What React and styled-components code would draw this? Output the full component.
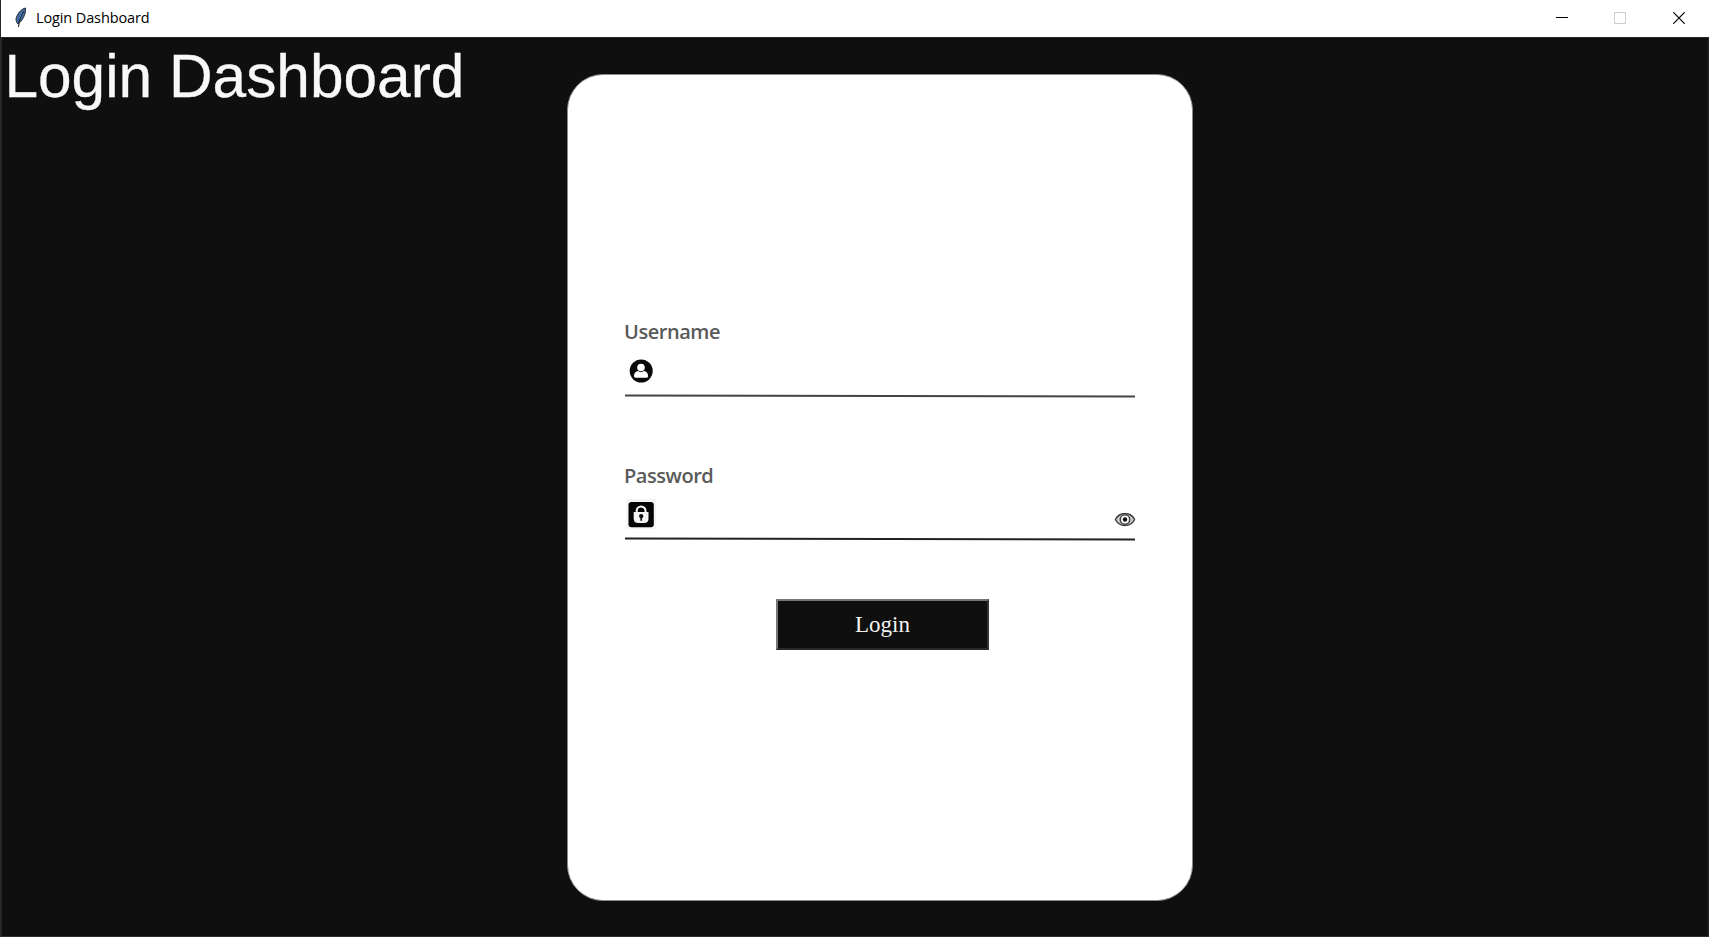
import React from "react";
import styled, { createGlobalStyle } from "styled-components";

const GlobalStyle = createGlobalStyle`
  * { box-sizing: border-box; }
  body { margin: 0; overflow: hidden; background: #0f0f0f; }
`;

const Window = styled.div`
  display: flex;
  flex-direction: column;
  width: 1709px;
  height: 937px;
  background: #0f0f0f;
`;

const TitleBar = styled.header`
  display: flex;
  align-items: center;
  justify-content: space-between;
  height: 37px;
  padding: 0 24px 2px 14px;
  background: #fff;
  border-left: 1px solid #262626;
`;

const TitleGroup = styled.div`
  display: flex;
  align-items: center;
`;

const TitleText = styled.span`
  margin: 1px 0 0 9px;
  font: 400 14.5px/20px "Open Sans", sans-serif;
  letter-spacing: -0.12px;
  color: #000;
`;

const Controls = styled.div`
  display: flex;
  align-items: center;
  margin-top: 1px;
`;

const Control = styled.button`
  display: flex;
  margin-left: ${(p) => p.$gap || "0"};
  padding: 0;
  border: 0;
  background: none;
`;

const Body = styled.main`
  display: grid;
  grid-template-columns: 565px 626px 1fr;
  align-items: start;
  flex: 1;
  border: 1px solid #272727;
  border-left-width: 2px;
  border-bottom-color: #302c31;
`;

const Heading = styled.h1`
  margin: 4px 0 0 2.4px;
  font: 400 60.4px/69px "Liberation Sans", Arial, sans-serif;
  color: #f8f8f8;
  -webkit-text-stroke: 0.3px #f8f8f8;
  white-space: nowrap;
`;

const Card = styled.form`
  display: flex;
  flex-direction: column;
  height: 827px;
  margin-top: 36px;
  padding: 243px 57px 0;
  border: 1px solid #8b8b8b;
  border-radius: 36px;
  background: #fff;
`;

const Field = styled.div`
  height: 144px;
`;

const Label = styled.label`
  display: block;
  height: 28px;
  margin-left: -1px;
  font: 600 20px/28px "Open Sans", sans-serif;
  letter-spacing: -0.45px;
  color: #5a5a5a;
`;

const Entry = styled.div`
  display: flex;
  align-items: center;
  justify-content: space-between;
  height: ${(p) => p.$height};
`;

const Rule = styled.div`
  height: 1.6px;
  background: ${(p) => p.$color};
  transform: rotate(0.12deg);
`;

const LoginButton = styled.button`
  width: 213px;
  height: 51px;
  margin: -7px 0 0 151px;
  padding: 1px 0 0;
  border: 2px solid;
  border-color: #777 #333 #292929 #777;
  background: #0f0f0f;
  color: #f2f2f2;
  font: 400 23px/30px "Liberation Serif", serif;
`;

const Feather = () => (
  <svg width="12" height="21" viewBox="0 0 12 21">
    <path d="M10.5 1C6 2 2 7 1 12c0 2 1 4 2 5 4-3 8-9 7.500-16Z" fill="#3c6ea5" stroke="#252b33" strokeWidth="1" />
    <path d="M9 3C7 5 5 9 4 13L7 8Z" fill="#8bbce8" />
    <path d="M9 4C6 8 4 14 3.500 20" fill="none" stroke="#202020" strokeWidth="1.100" />
  </svg>
);

const UserIcon = () => (
  <svg width="34" height="28" viewBox="0 0 34 28">
    <circle cx="16.200" cy="14" r="11.500" fill="#080808" />
    <circle cx="16" cy="10.500" r="3.800" fill="#fff" />
    <path d="M9 19.100c0-3.100 1.800-4.800 4-5 1.700 1.400 4.200 1.400 6 0 2.300.2 4.100 1.900 4.100 5 0 .9-.6 1.700-1.500 1.700H10.500c-.9 0-1.500-.8-1.500-1.700Z" fill="#fff" />
  </svg>
);

const LockIcon = () => (
  <svg width="34" height="30" viewBox="0 0 34 30">
    <path d="M1.200 0h30v30h-30Z" fill="#f5f5f5" />
    <rect x="3.500" y="3" width="25.300" height="25.200" rx="3" fill="#040404" />
    <path d="M11.700 14.300v-2.400a4.400 4.400 0 0 1 8.800 0v2.400" fill="none" stroke="#f5f5f5" strokeWidth="2" />
    <path d="M8.700 13.100h14.800v6.600c0 2.800-1.600 4.400-4.400 4.400h-6c-2.800 0-4.400-1.600-4.400-4.400Z" fill="#f5f5f5" />
    <circle cx="16.200" cy="17.100" r="2.200" fill="#111" />
    <path d="M16.200 16.800v5" stroke="#111" strokeWidth="1.700" />
  </svg>
);

const EyeIcon = () => (
  <svg width="21" height="14" viewBox="0 0 21 14" transform="translate(0.500 5.500)">
    <path d="M.8 7C3 3 6.500 1 10.500 1S18 3 20.200 7C18 11 14.500 13 10.500 13S3 11 .8 7Z" fill="#c9c9c9" stroke="#3a3a3a" strokeWidth="1.400" />
    <circle cx="10.500" cy="7" r="4.700" fill="#fff" stroke="#444" strokeWidth="1.500" />
    <circle cx="10.500" cy="7" r="2.200" fill="#111" />
  </svg>
);

export default function App() {
  return (
    <>
      <GlobalStyle />
      <Window>
        <TitleBar>
          <TitleGroup>
            <Feather />
            <TitleText>Login Dashboard</TitleText>
          </TitleGroup>
          <Controls>
            <Control type="button" aria-label="Minimize">
              <svg width="12" height="12"><path d="M0 5.500h12" stroke="#000" /></svg>
            </Control>
            <Control type="button" aria-label="Maximize" $gap="46px" disabled>
              <svg width="12" height="12"><path d="M.5.5h11v11H.5Z" fill="none" stroke="#ccc" /></svg>
            </Control>
            <Control type="button" aria-label="Close" $gap="47px">
              <svg width="12" height="12"><path d="m.3.300 11.400 11.400M11.700.3.300 11.700" stroke="#000" strokeWidth="1.200" /></svg>
            </Control>
          </Controls>
        </TitleBar>
        <Body>
          <Heading>Login Dashboard</Heading>
          <Card>
            <Field>
              <Label>Username</Label>
              <Entry $height="49px"><UserIcon /></Entry>
              <Rule $color="#444" />
            </Field>
            <Field>
              <Label>Password</Label>
              <Entry $height="48px"><LockIcon /><EyeIcon /></Entry>
              <Rule $color="#222" />
            </Field>
            <LoginButton type="button">Login</LoginButton>
          </Card>
        </Body>
      </Window>
    </>
  );
}
